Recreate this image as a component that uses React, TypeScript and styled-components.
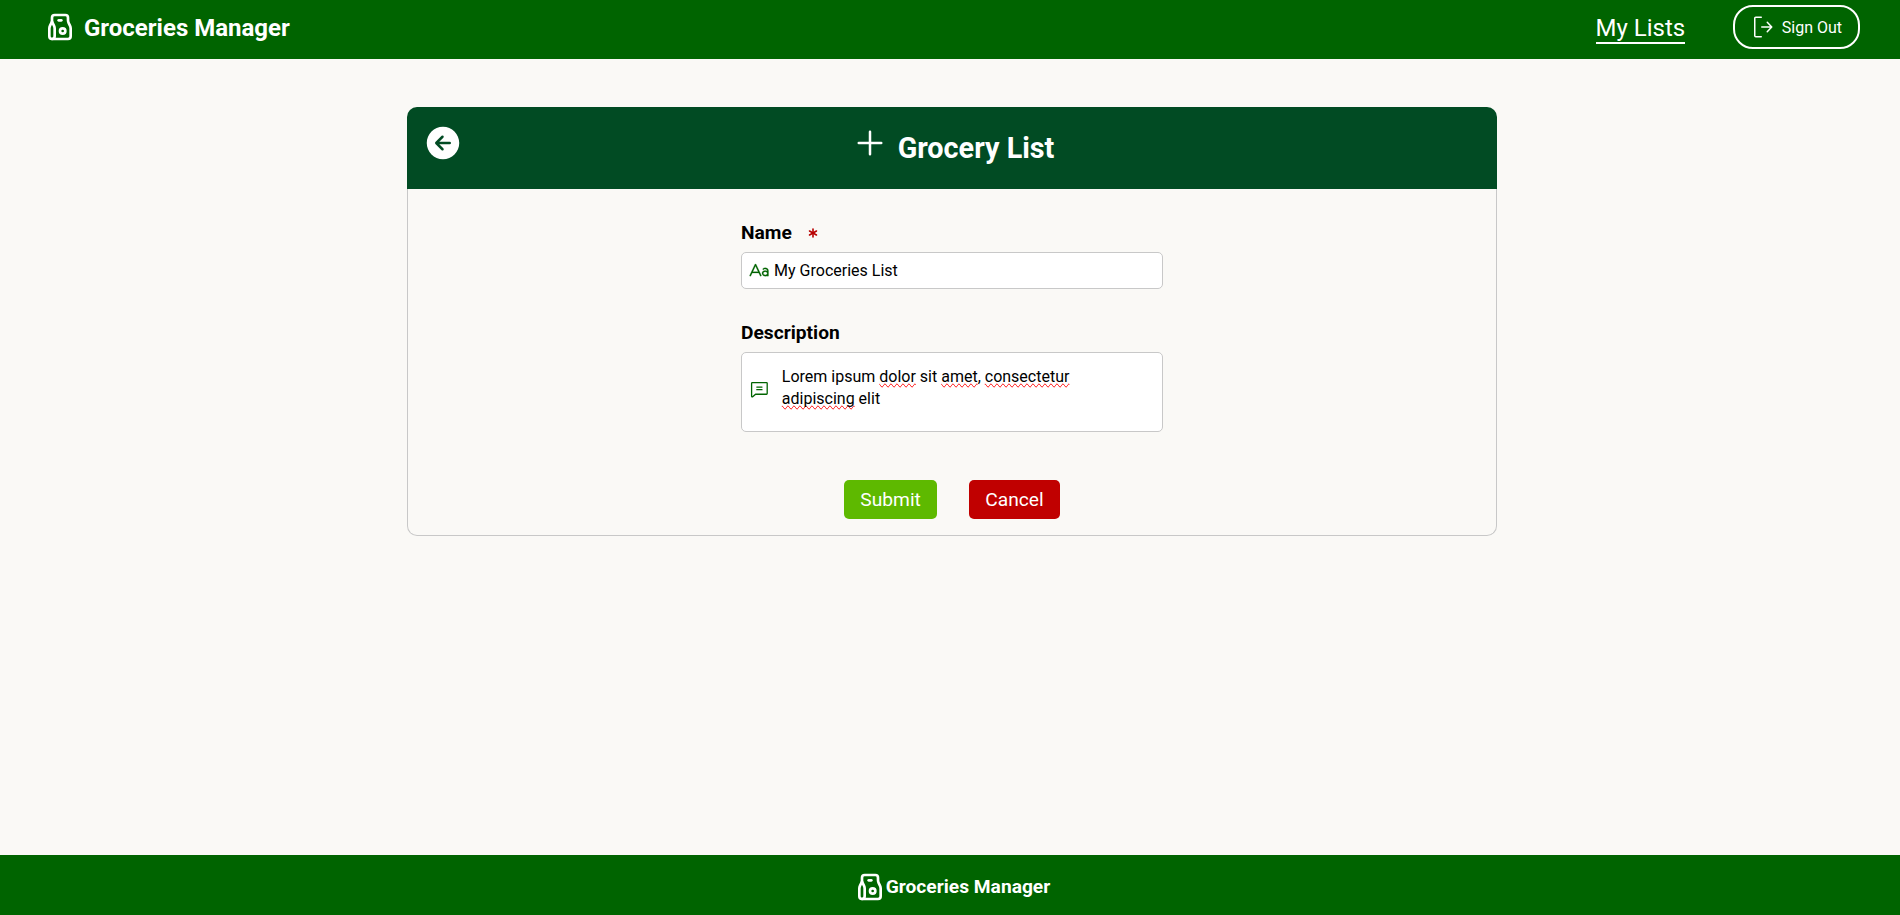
import React from 'react';
import styled, { createGlobalStyle } from 'styled-components';
import { TbPaperBag } from 'react-icons/tb';
import { GoSignOut } from 'react-icons/go';
import { IoAdd, IoArrowBackCircle } from 'react-icons/io5';
import { PiChatText, PiTextAa } from 'react-icons/pi';
import { LuAsterisk } from 'react-icons/lu';

const GlobalStyle = createGlobalStyle`
  *, *::before, *::after { box-sizing: border-box; }
  body {
    margin: 0;
    background: #faf9f6;
    color: #000;
    font-family: Roboto, "Liberation Sans", sans-serif;
    font-size: 16px;
  }
`;

const Page = styled.div`
  min-height: 100vh;
  display: flex;
  flex-direction: column;
`;

const NavBar = styled.header`
  height: 59px;
  padding: 0 40px 5px 44px;
  display: flex;
  align-items: center;
  justify-content: space-between;
  background: #006400;
  color: #fff;
`;

const Brand = styled.div<{ $size: number; $gap: number }>`
  display: flex;
  align-items: center;
  gap: ${(p) => p.$gap}px;
  font-size: ${(p) => p.$size}px;
  line-height: 28px;
  font-weight: 700;
`;

const BrandName = styled.span<{ $drop: number }>`
  padding-top: ${(p) => p.$drop}px;
`;

const NavLinks = styled.nav`
  display: flex;
  align-items: center;
  gap: 48px;
`;

const NavLink = styled.a`
  margin-top: 4px;
  border-bottom: 2px solid #fff;
  font-size: 24px;
  line-height: 28px;
`;

const SignOutButton = styled.button`
  height: 44px;
  padding: 0 16px;
  display: flex;
  align-items: center;
  gap: 6.5px;
  border: 2px solid #fff;
  border-radius: 20px;
  background: transparent;
  color: inherit;
  font: 400 16px/20px Roboto, sans-serif;
`;

const SignOutText = styled.span`
  padding-top: 2px;
`;

const Main = styled.main`
  flex: 1;
  padding: 48px 0 0 4px;
`;

const Card = styled.section`
  width: 1090px;
  margin: 0 auto;
`;

const CardHeader = styled.div`
  height: 82px;
  padding: 16px 16px 0;
  display: grid;
  grid-template-columns: 1fr auto 1fr;
  align-items: start;
  border-radius: 10px 10px 0 0;
  background: #014b23;
  color: #fff;
`;

const Title = styled.h1`
  margin: 0;
  display: flex;
  gap: 8px;
  font-size: 28.8px;
  line-height: 34px;
  font-weight: 700;
`;

const TitleText = styled.span`
  padding-top: 8px;
`;

const CardBody = styled.form`
  height: 347px;
  padding-top: 32px;
  display: flex;
  flex-direction: column;
  align-items: center;
  border: 1px solid #c8c8c8;
  border-top: 0;
  border-radius: 0 0 10px 10px;
`;

const Field = styled.div`
  width: 422px;
  margin-bottom: 32px;
`;

const Label = styled.label`
  margin-bottom: 7px;
  display: flex;
  align-items: center;
  gap: 13px;
  font-size: 19.2px;
  line-height: 24px;
  font-weight: 700;
`;

const RequiredMark = styled(LuAsterisk)`
  margin-bottom: 1px;
  color: #b80000;
  stroke-width: 2.4;
`;

const Control = styled.div<{ $height: number; $gap: number }>`
  height: ${(p) => p.$height}px;
  padding: 0 6.5px;
  display: flex;
  align-items: center;
  gap: ${(p) => p.$gap}px;
  border: 1px solid #c8c8c8;
  border-radius: 5px;
  background: #fff;
  line-height: 22px;

  svg { flex: none; color: #006400; }
`;

const NameIcon = styled(PiTextAa)`
  stroke: currentColor;
  stroke-width: 3;
`;

const MessageIcon = styled(PiChatText)`
  margin-bottom: 7px;
`;

const TextArea = styled.div`
  width: 330px;
  height: 53px;
`;

const Misspelled = styled.span`
  text-decoration: spelling-error;
`;

const Actions = styled.div`
  margin-top: 16px;
  display: flex;
  gap: 32px;
`;

const ActionButton = styled.button<{ $color: string }>`
  height: 39px;
  padding: 0 16.2px;
  border: 0;
  border-radius: 5px;
  background: ${(p) => p.$color};
  color: #fff;
  font: 400 19.2px/23px Roboto, sans-serif;
`;

const Footer = styled.footer`
  height: 60px;
  padding: 4px 0 0 4px;
  display: flex;
  align-items: center;
  justify-content: center;
  background: #006400;
  color: #fff;
`;

export default function App() {
  return (
    <Page>
      <GlobalStyle />
      <NavBar>
        <Brand $size={24} $gap={8}>
          <TbPaperBag size={32} />
          <BrandName $drop={2}>Groceries Manager</BrandName>
        </Brand>
        <NavLinks>
          <NavLink>My Lists</NavLink>
          <SignOutButton>
            <GoSignOut size={24} />
            <SignOutText>Sign Out</SignOutText>
          </SignOutButton>
        </NavLinks>
      </NavBar>
      <Main>
        <Card>
          <CardHeader>
            <IoArrowBackCircle size={40} />
            <Title>
              <IoAdd size={40} />
              <TitleText>Grocery List</TitleText>
            </Title>
          </CardHeader>
          <CardBody>
            <Field>
              <Label>
                Name
                <RequiredMark size={16} />
              </Label>
              <Control $height={37} $gap={4.8}>
                <NameIcon size={20.8} />
                <span>My Groceries List</span>
              </Control>
            </Field>
            <Field>
              <Label>Description</Label>
              <Control $height={80} $gap={12.5}>
                <MessageIcon size={20.8} />
                <TextArea>
                  Lorem ipsum <Misspelled>dolor</Misspelled> sit <Misspelled>amet</Misspelled>,{' '}
                  <Misspelled>consectetur</Misspelled> <Misspelled>adipiscing</Misspelled> elit
                </TextArea>
              </Control>
            </Field>
            <Actions>
              <ActionButton type="button" $color="#5eb900">Submit</ActionButton>
              <ActionButton type="button" $color="#c00000">Cancel</ActionButton>
            </Actions>
          </CardBody>
        </Card>
      </Main>
      <Footer>
        <Brand $size={19.2} $gap={0}>
          <TbPaperBag size={32} />
          <BrandName $drop={0}>Groceries Manager</BrandName>
        </Brand>
      </Footer>
    </Page>
  );
}
